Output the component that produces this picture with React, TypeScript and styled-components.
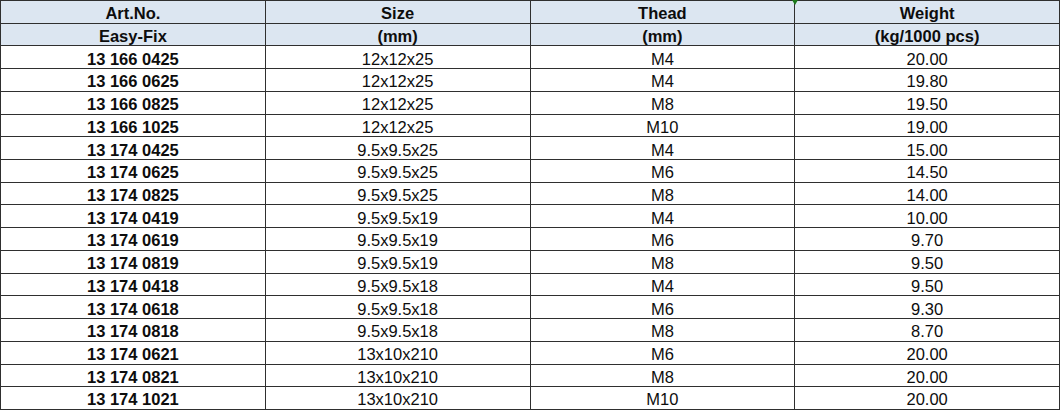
import { FC, Fragment } from 'react';
import styled, { createGlobalStyle } from 'styled-components';

const GlobalStyle = createGlobalStyle`
  html, body {
    margin: 0;
    padding: 0;
    background: #fff;
  }
`;

const Grid = styled.div`
  display: grid;
  grid-template-columns: repeat(4, 1fr);
  grid-template-rows: repeat(18, 1fr);
  gap: 1px;
  padding: 1px;
  width: 1060px;
  height: 410px;
  box-sizing: border-box;
  background: #2f2f2f;
  font-family: 'Liberation Sans', Arial, sans-serif;
  font-size: 16.5px;
  color: #0d0d0d;
`;

const Cell = styled.div<{ $head?: boolean; $bold?: boolean }>`
  position: relative;
  display: flex;
  align-items: flex-end;
  justify-content: center;
  padding-bottom: 1px;
  line-height: 1;
  background: ${(p) => (p.$head ? '#dce6f1' : '#fff')};
  font-weight: ${(p) => (p.$head || p.$bold ? 700 : 400)};
  white-space: nowrap;
`;

// Excel's little comment/error marker in the corner of a cell
const Marker = styled.span`
  position: absolute;
  top: -1px;
  left: -3px;
  width: 0;
  height: 0;
  border-top: 5px solid #1c7a1c;
  border-left: 3px solid transparent;
  border-right: 3px solid transparent;
`;

const rows: [string, string, string, string][] = [
  ['13 166 0425', '12x12x25', 'M4', '20.00'],
  ['13 166 0625', '12x12x25', 'M4', '19.80'],
  ['13 166 0825', '12x12x25', 'M8', '19.50'],
  ['13 166 1025', '12x12x25', 'M10', '19.00'],
  ['13 174 0425', '9.5x9.5x25', 'M4', '15.00'],
  ['13 174 0625', '9.5x9.5x25', 'M6', '14.50'],
  ['13 174 0825', '9.5x9.5x25', 'M8', '14.00'],
  ['13 174 0419', '9.5x9.5x19', 'M4', '10.00'],
  ['13 174 0619', '9.5x9.5x19', 'M6', '9.70'],
  ['13 174 0819', '9.5x9.5x19', 'M8', '9.50'],
  ['13 174 0418', '9.5x9.5x18', 'M4', '9.50'],
  ['13 174 0618', '9.5x9.5x18', 'M6', '9.30'],
  ['13 174 0818', '9.5x9.5x18', 'M8', '8.70'],
  ['13 174 0621', '13x10x210', 'M6', '20.00'],
  ['13 174 0821', '13x10x210', 'M8', '20.00'],
  ['13 174 1021', '13x10x210', 'M10', '20.00'],
];

const App: FC = () => (
  <>
    <GlobalStyle />
    <Grid>
      {/* Header */}
      <Cell $head>Art.No.</Cell>
      <Cell $head>Size</Cell>
      <Cell $head>Thead</Cell>
      <Cell $head>
        <Marker />
        Weight
      </Cell>
      <Cell $head>Easy-Fix</Cell>
      <Cell $head>(mm)</Cell>
      <Cell $head>(mm)</Cell>
      <Cell $head>(kg/1000 pcs)</Cell>

      {/* Rows */}
      {rows.map(([art, size, thread, weight]) => (
        <Fragment key={art}>
          <Cell $bold>{art}</Cell>
          <Cell>{size}</Cell>
          <Cell>{thread}</Cell>
          <Cell>{weight}</Cell>
        </Fragment>
      ))}
    </Grid>
  </>
);

export default App;
